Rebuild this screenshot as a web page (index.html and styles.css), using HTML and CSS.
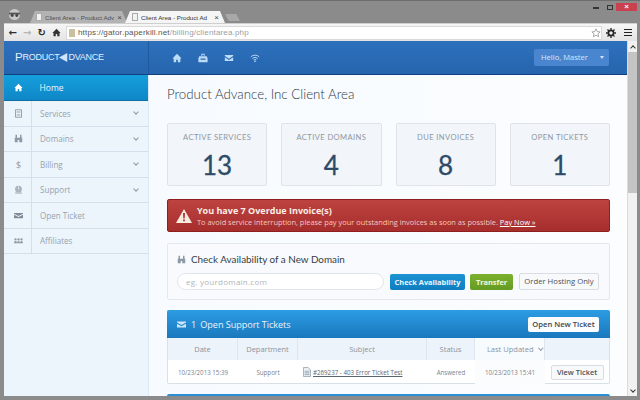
FILE: index.html
```html
<!DOCTYPE html>
<html lang="en">
<head>
<meta charset="utf-8">
<title>Client Area - Product Advance</title>
<link rel="stylesheet" href="styles.css">
</head>
<body>
<div class="window">
  <div class="titlebar">
    <svg class="incognito" viewBox="0 0 16 14"><circle cx="8" cy="7" r="6" fill="#c9c9c9"/><path d="M2 5h12v2H2z" fill="#555"/><circle cx="5.500" cy="8" r="1.600" fill="#444"/><circle cx="10.500" cy="8" r="1.600" fill="#444"/></svg>
    <div class="tab tab-off"><span class="fav"></span><span class="tab-text">Client Area - Product Adv</span><span class="tab-x">×</span></div>
    <div class="tab tab-on"><span class="fav"></span><span class="tab-text">Client Area - Product Ad</span><span class="tab-x">×</span></div>
    <div class="tab-new"></div>
    <div class="controls">
      <span class="ctl ctl-min"></span>
      <span class="ctl ctl-max"></span>
      <span class="ctl-close">×</span>
    </div>
  </div>
  <div class="toolbar">
    <span class="nav">←</span>
    <span class="nav nav-off">→</span>
    <span class="nav">↻</span>
    <svg class="nav-home" viewBox="0 0 12 12"><path d="M6 1 .5 6.500H2V11h3V8h2v3h3V6.500h1.500z" fill="#333"/></svg>
    <div class="omnibox">
      <span class="lock"></span>
      <span class="url"><span class="url-dark">https://gator.paperkill.net</span>/billing/clientarea.php</span>
      <svg class="star" viewBox="0 0 12 12"><path d="m6 1 1.500 3.300 3.500.4-2.600 2.300.8 3.500L6 8.700 2.800 10.500l.8-3.500L1 4.700l3.500-.4z" fill="#fff" stroke="#999"/></svg>
    </div>
    <svg class="gear" viewBox="0 0 12 12"><circle cx="6" cy="6" r="3.200" fill="none" stroke="#222" stroke-width="2.200"/><path d="M6 0v12M0 6h12M1.800 1.800l8.400 8.400M10.200 1.800l-8.400 8.400" stroke="#222" stroke-width="1.600" stroke-dasharray="2 8"/></svg>
    <span class="menu"><i></i><i></i><i></i></span>
  </div>
  <div class="viewport">
    <div class="page">
      <header class="topbar">
        <div class="brand"><span class="brand-big">P</span>RODUCT<svg class="brand-mark" viewBox="0 0 12 12"><path d="M0 6 11 0v12z" fill="#cfe6fa"/></svg>DVANCE</div>
        <nav class="topnav">
          <svg class="ti" viewBox="0 0 12 12"><path d="M6 1 .5 6.500H2V11h3V8h2v3h3V6.500h1.500z"/></svg>
          <svg class="ti" viewBox="0 0 12 12"><path d="M4 1h4v2.500H7V2H5v1.500H4zM1.500 4h9l1 2.500V11h-11V6.500zM3 6.500V8h6V6.500z"/></svg>
          <svg class="ti" viewBox="0 0 12 12"><path d="M1 2.500h10v1.200L6 7 1 3.700zM1 5l5 3.300L11 5v4.500H1z"/></svg>
          <svg class="ti" viewBox="0 0 12 12"><path d="M1 4.500a7.500 7.500 0 0 1 10 0M2.800 6.500a5 5 0 0 1 6.400 0M4.500 8.300a2.500 2.500 0 0 1 3 0" fill="none" stroke="#bcdcf8" stroke-width="1.100"/><circle cx="6" cy="10" r="1"/></svg>
        </nav>
        <div class="hello">Hello, Master<span class="hello-caret"></span></div>
      </header>
      <div class="body">
        <aside class="sidebar">
          <div class="side-home"><svg class="si si-home" viewBox="0 0 12 12"><path d="M6 1 .5 6.500H2V11h3V8h2v3h3V6.500h1.500z"/></svg><span>Home</span></div>
          <div class="side-item"><span class="si-cell"><svg class="si" viewBox="0 0 12 12"><path d="M2 1h8v10H2zM3.500 4h5M3.500 8h5" fill="none" stroke="#8d9aa6" stroke-width="1.200"/></svg></span><span class="si-label">Services</span><span class="chev"></span></div>
          <div class="side-item"><span class="si-cell"><svg class="si" viewBox="0 0 12 12"><path d="M1 5h4v6H1zM7 5h4v6H7zM2 1h2v4H2zM8 1h2v4H8zM5 5h2v3H5z" fill="#8d9aa6"/></svg></span><span class="si-label">Domains</span><span class="chev"></span></div>
          <div class="side-item"><span class="si-cell si-text">$</span><span class="si-label">Billing</span><span class="chev"></span></div>
          <div class="side-item"><span class="si-cell"><svg class="si" viewBox="0 0 12 12"><circle cx="6" cy="5.500" r="4.500" fill="#a9b4be"/><path d="M1.500 10h9v1.500h-9z" fill="#a9b4be"/><path d="M6 2v4" stroke="#eef5fb"/></svg></span><span class="si-label">Support</span><span class="chev"></span></div>
          <div class="side-item"><span class="si-cell"><svg class="si" viewBox="0 0 12 12"><path d="M0 2.500h12v1L6 6.500 0 3.500zM0 5l6 3 6-3v4.500H0z" fill="#7f8c98"/></svg></span><span class="si-label">Open Ticket</span></div>
          <div class="side-item"><span class="si-cell"><svg class="si" viewBox="0 0 12 12"><path d="M0 9.500c0-2 1-3 2-3s2 1 2 3zM4 9.500c0-2 1-3 2-3s2 1 2 3zM8 9.500c0-2 1-3 2-3s2 1 2 3z" fill="#8d9aa6"/><circle cx="2" cy="4.500" r="1.500" fill="#8d9aa6"/><circle cx="6" cy="4.500" r="1.500" fill="#8d9aa6"/><circle cx="10" cy="4.500" r="1.500" fill="#8d9aa6"/></svg></span><span class="si-label">Affiliates</span></div>
        </aside>
        <main class="main">
          <h1 class="title">Product Advance, Inc Client Area</h1>
          <section class="stats">
            <div class="stat"><div class="stat-label">ACTIVE SERVICES</div><div class="stat-num">13</div></div>
            <div class="stat"><div class="stat-label">ACTIVE DOMAINS</div><div class="stat-num">4</div></div>
            <div class="stat"><div class="stat-label">DUE INVOICES</div><div class="stat-num">8</div></div>
            <div class="stat"><div class="stat-label">OPEN TICKETS</div><div class="stat-num">1</div></div>
          </section>
          <section class="alert">
            <svg class="alert-icon" viewBox="0 0 16 14"><path d="M8 0 16 14H0z" fill="#f7ebe0"/><path d="M7 4h2l-.3 5.500H7.300zM7.100 10.500h1.800v1.800H7.100z" fill="#b0322f"/></svg>
            <div class="alert-text">
              <div class="alert-head">You have 7 Overdue Invoice(s)</div>
              <div class="alert-sub">To avoid service interruption, please pay your outstanding invoices as soon as possible. <a class="alert-link">Pay Now »</a></div>
            </div>
          </section>
          <section class="domain">
            <div class="domain-title"><svg class="domain-icon" viewBox="0 0 12 12"><path d="M1 5h4v6H1zM7 5h4v6H7zM2 1h2v4H2zM8 1h2v4H8zM5 5h2v3H5z" fill="#8d9aa6"/></svg>Check Availability of a New Domain</div>
            <div class="domain-row">
              <div class="domain-input">eg. yourdomain.com</div>
              <span class="btn btn-blue">Check Availability</span>
              <span class="btn btn-green">Transfer</span>
              <span class="btn btn-white">Order Hosting Only</span>
            </div>
          </section>
          <section class="panel">
            <div class="panel-head">
              <svg class="panel-icon" viewBox="0 0 12 12"><path d="M0 2h12v1.200L6 6.500 0 3.200zM0 5l6 3.200L12 5v5H0z" fill="#cfe6fa"/></svg>
              <span class="panel-count">1</span>
              <span class="panel-title">Open Support Tickets</span>
              <span class="panel-btn">Open New Ticket</span>
            </div>
            <div class="tgrid thead">
              <span class="th">Date</span>
              <span class="th">Department</span>
              <span class="th">Subject</span>
              <span class="th">Status</span>
              <span class="th th-sorted">Last Updated<span class="chev chev-th"></span></span>
              <span class="th th-empty"></span>
            </div>
            <div class="tgrid trow">
              <span class="td">10/23/2013 15:39</span>
              <span class="td">Support</span>
              <span class="td td-subject"><svg class="doc" viewBox="0 0 10 12"><path d="M.5.500h6l3 3v8H.500z" fill="#eef3f7" stroke="#8a9aa8"/><path d="M2 5h6M2 7h6M2 9h6" stroke="#8a9aa8"/></svg><a class="ticket-link">#269237 - 403 Error Ticket Test</a></span>
              <span class="td">Answered</span>
              <span class="td td-sorted">10/23/2013 15:41</span>
              <span class="td"><span class="view-btn">View Ticket</span></span>
            </div>
          </section>
          <div class="panel-next"></div>
        </main>
      </div>
    </div>
    <div class="scrollbar">
      <span class="sb-end"><i class="sb-up"></i></span>
      <span class="sb-thumb"></span>
      <span class="sb-track"></span>
      <span class="sb-end"><i class="sb-down"></i></span>
    </div>
  </div>
</div>
</body>
</html>
```

FILE: styles.css
```css
* { box-sizing: border-box; }
html, body { margin: 0; padding: 0; }
body { width: 640px; height: 400px; overflow: hidden; font-family: "Open Sans", sans-serif; }
.window { width: 640px; height: 400px; display: flex; flex-direction: column; background: #8b8b8b; border-top: 1px solid #6d6d6d; overflow: hidden; }

.titlebar { height: 22px; flex: none; display: flex; align-items: flex-end; padding-left: 7px; }
.incognito { width: 15px; height: 13px; margin-bottom: 2px; margin-right: 8px; flex: none; }
.tab { height: 12px; display: flex; align-items: center; font: 6.200px "Liberation Sans", sans-serif; clip-path: polygon(0 100%, 5px 0, calc(100% - 5px) 0, 100% 100%); flex: none; }
.tab-off { width: 97px; background: #b3b3b3; color: #4e4e4e; padding: 0 5px 0 6px; }
.tab-on { width: 100px; background: #f5f5f5; color: #333; margin-left: -2px; padding: 0 6px 0 7px; }
.fav { width: 6px; height: 8px; background: #f2f2f2; border: 1px solid #aaa; margin-right: 3px; flex: none; }
.tab-text { white-space: nowrap; overflow: hidden; flex: 1; }
.tab-x { font-size: 8px; margin-left: 2px; color: #444; }
.tab-new { width: 15px; height: 7px; background: #a8a8a8; margin-bottom: 2px; clip-path: polygon(0 0, 75% 0, 100% 100%, 25% 100%); flex: none; }
.controls { margin-left: auto; align-self: flex-start; display: flex; align-items: center; padding-right: 3px; margin-top: 2px; }
.ctl { display: block; width: 6px; margin-right: 8px; }
.ctl-min { height: 2px; background: #333; margin-top: 2px; }
.ctl-max { height: 5px; border: 1px solid #333; margin-right: 3px; }
.ctl-close { display: block; width: 21px; height: 8px; background: #c9404f; color: #fff; font: bold 8px/8px "Liberation Sans", sans-serif; text-align: center; }

.toolbar { height: 18px; flex: none; margin-left: 4px; margin-right: 3px; background: linear-gradient(#f6f6f6, #e4e4e4); border-top: 1px solid #cfcfcf; display: flex; align-items: center; padding-left: 1.500px; }
.nav { width: 14.500px; font: bold 10px/12px "DejaVu Sans", sans-serif; color: #2e2e2e; text-align: center; flex: none; }
.nav-off { color: #b5b5b5; }
.nav-home { width: 9px; height: 9px; margin-left: 3px; flex: none; }
.omnibox { flex: 1; height: 14px; margin-left: 5px; margin-right: 4px; background: #fff; border: 1px solid #d9d9d9; display: flex; align-items: center; padding-left: 2px; min-width: 0; }
.lock { width: 6px; height: 8px; background: #c9c0a0; margin-right: 3px; flex: none; }
.url { font: 8px "Liberation Sans", sans-serif; color: #9aa0a6; flex: 1; letter-spacing: .17px; white-space: nowrap; }
.url-dark { color: #555; }
.star { width: 10px; height: 10px; flex: none; }
.gear { width: 10px; height: 10px; margin-right: 8px; flex: none; }
.menu { width: 8px; display: flex; flex-direction: column; gap: 2px; margin-right: 5px; flex: none; }
.menu i { display: block; height: 1px; background: #222; }

.viewport { flex: 1; min-height: 0; margin: 0 3px 4px 4px; display: flex; background: #fff; }
.page { flex: 1; min-width: 0; display: flex; flex-direction: column; background: #f8fbff; overflow: hidden; }
.topbar { height: 34px; flex: none; background: linear-gradient(#2f70bd, #2565ae); border-bottom: 1px solid #123f7c; display: flex; align-items: center; }
.brand { width: 145px; flex: none; height: 100%; padding-left: 11px; border-right: 1px solid #1f5a9f; color: #e2f0fd; font: 9px/33px "Liberation Sans", sans-serif; letter-spacing: -.25px; display: flex; align-items: center; white-space: nowrap; }
.brand-big { font-size: 11.500px; }
.brand-mark { width: 9px; height: 9px; margin: 0; flex: none; }
.topnav { display: flex; gap: 16px; padding-left: 23px; align-items: center; }
.ti { width: 10px; height: 10px; fill: #bcdcf8; display: block; }
.hello { margin-left: auto; margin-right: 18px; width: 75px; height: 17px; background: #4a85cf; border-radius: 2px; color: #d5e8fb; font: 7.600px/17px "Open Sans", sans-serif; padding-left: 7px; display: flex; align-items: center; white-space: nowrap; }
.hello-caret { width: 0; height: 0; border-left: 2.500px solid transparent; border-right: 2.500px solid transparent; border-top: 3px solid #cfe4fa; margin-left: 12px; }

.body { flex: 1; min-height: 0; display: flex; }
.sidebar { width: 145px; flex: none; background: #ecf4fc; border-right: 1px solid #dce8f3; }
.side-home { height: 26px; background: linear-gradient(#159fdc, #0f86c7); border-bottom: 1px solid #0b6ea8; display: flex; align-items: center; color: #eaf6fe; font-size: 8.500px; }
.si-home { width: 10px; height: 10px; fill: #fff; margin-left: 9.500px; margin-right: 17px; }
.si { width: 9px; height: 9px; display: block; }
.side-item { height: 25.500px; border-bottom: 1px solid #d3e0ec; display: flex; align-items: center; color: #98a3ad; font-size: 8.100px; }
.si-cell { width: 28px; height: 100%; border-right: 1px solid #d3e0ec; display: flex; align-items: center; justify-content: center; padding-left: 2px; flex: none; }
.si-text { font-size: 9px; color: #8d9aa6; }
.si-label { margin-left: 8px; flex: 1; }
.chev { display: block; width: 4px; height: 4px; border-right: 1px solid #8d9aa6; border-bottom: 1px solid #8d9aa6; transform: rotate(45deg); margin-right: 10px; margin-top: -2px; }

.main { flex: 1; min-width: 0; padding: 0 17px 0 18px; background: linear-gradient(90deg, #f7fbff, #fbfdff); overflow: hidden; }
.title { margin: 10px 0 0; height: 18px; font: 300 13.300px/18px "Lato", sans-serif; color: #2f3a44; }
.stats { display: grid; grid-template-columns: repeat(4, 1fr); gap: 14px; margin-top: 20px; }
.stat { height: 63px; background: #f2f5f9; border: 1px solid #dfe4ea; border-radius: 2px; text-align: center; }
.stat-label { margin-top: 8px; font: 7.600px/10px "Lato", sans-serif; letter-spacing: .4px; color: #8f98a2; }
.stat-num { margin-top: 7px; font: 26px/32px "Lato", sans-serif; color: #2d4b68; -webkit-text-stroke: .3px #2d4b68; }
.alert { height: 33px; margin-top: 13px; background: linear-gradient(#bd4340, #a62e2c); border: 1px solid #8f1f1f; border-radius: 2px; display: flex; align-items: center; padding-left: 8px; }
.alert-icon { width: 16px; height: 14px; margin-right: 5px; flex: none; }
.alert-text { min-width: 0; }
.alert-head { font: bold 9px/11px "Open Sans", sans-serif; color: #fbeee6; }
.alert-sub { font: 7.430px/10px "Open Sans", sans-serif; color: #f4c8c0; white-space: nowrap; margin-top: 1px; }
.alert-link { color: #fff; text-decoration: underline; }
.domain { height: 57px; margin-top: 11px; background: #f8fafd; border: 1px solid #e3e8ee; border-radius: 2px; padding: 8px 9px 0 9px; }
.domain-title { display: flex; align-items: center; font: 9.900px/14px "Lato", sans-serif; color: #333d47; }
.domain-icon { width: 9px; height: 9px; margin-right: 5px; flex: none; }
.domain-row { display: flex; align-items: center; margin-top: 7px; }
.domain-input { width: 207px; height: 17px; background: #fff; border: 1px solid #e1e6ec; border-radius: 9px; font: 8px/15px "Open Sans", sans-serif; color: #b0b6bc; padding-left: 8px; letter-spacing: .25px; margin-right: 6px; flex: none; }
.btn { height: 16px; display: block; border-radius: 2px; font: bold 7.400px/16px "Open Sans", sans-serif; text-align: center; white-space: nowrap; flex: none; }
.btn-blue { width: 75px; background: linear-gradient(#1c93d3, #0f7ec0); color: #e9f6fe; margin-right: 5px; }
.btn-green { width: 43px; background: linear-gradient(#7cb02e, #649b22); color: #f0f9e0; margin-right: 6px; }
.btn-white { width: 80px; height: 17px; background: #f8f9fb; border: 1px solid #d8dde3; color: #4a525a; font-weight: 400; font-size: 7.700px; line-height: 15px; }
.panel { height: 74px; margin-top: 10px; background: #fff; border: 1px solid #d9e1e8; border-top: 0; border-radius: 2px; }
.panel-head { height: 28px; margin: 0 -1px; background: linear-gradient(#2c9ce3, #1a78bd); border-radius: 2px 2px 0 0; display: flex; align-items: center; padding-left: 10px; color: #e4f3fe; }
.panel-icon { width: 9px; height: 9px; margin-right: 5px; flex: none; }
.panel-count { font: 9.200px "Open Sans", sans-serif; margin-right: 4px; }
.panel-title { font: 9.200px "Open Sans", sans-serif; letter-spacing: -.1px; }
.panel-btn { margin-left: auto; margin-right: 11px; width: 71px; height: 15px; background: #fafcfe; border-radius: 2px; color: #3a4750; font: 600 7.600px/15px "Open Sans", sans-serif; text-align: center; white-space: nowrap; }
.tgrid { display: grid; grid-template-columns: 70px 60px 129px 48px 70px 1fr; }
.thead { height: 22px; background: #edf3fa; }
.th { display: flex; align-items: center; justify-content: center; font-size: 7.500px; color: #8a949e; border-right: 1px solid #dde6ef; white-space: nowrap; }
.th-sorted { background: #f8fbfe; padding-left: 10px; }
.th-empty { border-right: 0; }
.chev-th { margin: -2px 0 0 5px; width: 3.500px; height: 3.500px; flex: none; }
.trow { height: 24px; }
.td { display: flex; align-items: center; justify-content: center; font-size: 6.200px; color: #7a838c; white-space: nowrap; min-width: 0; }
.td-subject { justify-content: flex-start; padding-left: 5px; }
.td-sorted { background: #fbfcfe; }
.doc { width: 8px; height: 10px; margin-right: 2px; flex: none; }
.ticket-link { color: #5a6570; text-decoration: underline; font-size: 6.200px; }
.view-btn { width: 53px; height: 15px; border: 1px solid #d8dde3; background: #f7f9fb; border-radius: 2px; color: #4a525a; font: 600 7.400px/13px "Open Sans", sans-serif; text-align: center; }
.panel-next { height: 20px; margin-top: 10px; background: #2a8fd6; border-radius: 2px 2px 0 0; }

.scrollbar { width: 10px; flex: none; background: #f1f1f1; border-left: 1px solid #dcdcdc; display: flex; flex-direction: column; align-items: stretch; }
.sb-end { height: 11px; flex: none; display: flex; align-items: center; justify-content: center; }
.sb-up, .sb-down { display: block; width: 4px; height: 4px; border-left: 1px solid #333; border-top: 1px solid #333; }
.sb-up { transform: rotate(45deg); margin-top: 2px; }
.sb-down { transform: rotate(225deg); margin-bottom: 2px; }
.sb-thumb { height: 141px; flex: none; background: #c4c4c4; }
.sb-track { flex: 1; }
```
